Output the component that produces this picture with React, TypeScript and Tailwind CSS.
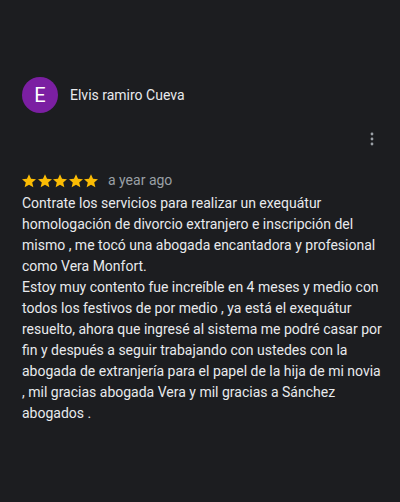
const text = [
  'Contrate los servicios para realizar un exequátur homologación de divorcio extranjero e inscripción del mismo , me tocó una abogada encantadora y profesional como Vera Monfort.',
  'Estoy muy contento fue increíble en 4 meses y medio con todos los festivos de por medio , ya está el exequátur resuelto, ahora que ingresé al sistema me podré casar por fin y después a seguir trabajando con ustedes con la abogada de extranjería para el papel de la hija de mi novia , mil gracias abogada Vera y mil gracias a Sánchez abogados .',
];

function Star() {
  return (
    <svg viewBox="2 2 20 20" className="w-[14px] h-[14px]" fill="#fbbc04">
      <path d="M12 2.2l2.9 6.6 7.1.6-5.4 4.7 1.6 7-6.2-3.7-6.2 3.7 1.6-7L2 9.4l7.1-.6z" />
    </svg>
  );
}

export default function App() {
  return (
    <div
      className="w-[400px] h-[502px] bg-[#1c1d20] pt-[77px] pl-[22px] pr-[14px]"
      style={{ fontFamily: 'Roboto, "Liberation Sans", sans-serif' }}
    >
      <div className="flex items-center gap-[12px]">
        <div className="w-[36px] h-[36px] rounded-full bg-[#7b1fa2] flex items-center justify-center text-white text-[20px]">
          E
        </div>
        <p className="text-[14px] text-[#e8eaed]">Elvis ramiro Cueva</p>
      </div>

      <div className="flex justify-end mt-[19px] pr-[12px]">
        <svg viewBox="0 0 4 14" className="w-[4px] h-[14px]" fill="#9aa0a6">
          <circle cx="2" cy="2" r="1.4" />
          <circle cx="2" cy="7" r="1.4" />
          <circle cx="2" cy="12" r="1.4" />
        </svg>
      </div>

      <div className="flex items-center mt-[24px] gap-[10px]">
        <div className="flex gap-[1.5px]">
          <Star />
          <Star />
          <Star />
          <Star />
          <Star />
        </div>
        <span className="text-[14px] text-[#9aa0a6]">a year ago</span>
      </div>

      <div className="mt-[2px] text-[14px] leading-[21px] text-[#e8eaed]">
        {text.map((t, i) => (
          <p key={i}>{t}</p>
        ))}
      </div>
    </div>
  );
}
